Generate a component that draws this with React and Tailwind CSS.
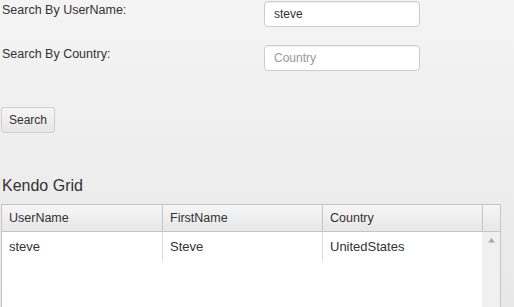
export default function App() {
  return (
    <div
      className="w-[514px] h-[307px] overflow-hidden bg-linear-to-b from-[#f4f4f4] to-[#e8e8e8] text-[#333333]"
      style={{ fontFamily: '"Liberation Sans", Arial, sans-serif' }}
    >
      <div className="flex pt-[1px]">
        <div className="w-[264px] pl-[2px] text-[12.5px] leading-[18px]">Search By UserName:</div>
        <input
          className="w-[156px] h-[26px] bg-white border border-[#cccccc] rounded-[4px] pl-[9px] text-[12px] text-[#333] outline-none shadow-[inset_0_1px_1px_rgba(0,0,0,0.06)]"
          style={{ fontFamily: '"Liberation Sans", Arial, sans-serif' }}
          defaultValue="steve"
        />
      </div>
      <div className="flex mt-[18px]">
        <div className="w-[264px] pl-[2px] text-[12.5px] leading-[18px]">Search By Country:</div>
        <input
          className="w-[156px] h-[26px] bg-white border border-[#cccccc] rounded-[4px] pl-[9px] text-[12px] text-[#333] placeholder:text-[#999999] outline-none shadow-[inset_0_1px_1px_rgba(0,0,0,0.06)]"
          style={{ fontFamily: '"Liberation Sans", Arial, sans-serif' }}
          placeholder="Country"
        />
      </div>
      <div className="mt-[36px] pl-[1px]">
        <button
          className="w-[54px] h-[26px] border border-[#cfcfcf] rounded-[3px] bg-linear-to-b from-[#f6f6f6] to-[#e6e6e6] text-[12px] text-[#333] leading-none"
          style={{ fontFamily: '"Liberation Sans", Arial, sans-serif' }}
        >
          Search
        </button>
      </div>
      <div className="mt-[43px] pl-[2px] text-[16px] leading-[20px] text-[#333]">Kendo Grid</div>
      <div className="mt-[8px] ml-[1px] w-[500px] border border-[#c5c5c5] bg-white">
        <div className="flex h-[27px] border-b border-[#c5c5c5] bg-linear-to-b from-[#f6f6f6] to-[#e7e7e7] text-[12.5px]">
          <div className="w-[160px] pl-[7px] leading-[26px]">UserName</div>
          <div className="w-[160px] pl-[7px] leading-[26px] border-l border-[#c5c5c5]">FirstName</div>
          <div className="w-[160px] pl-[7px] leading-[26px] border-l border-[#c5c5c5]">Country</div>
          <div className="w-[18px] border-l border-[#c5c5c5]"></div>
        </div>
        <div className="flex h-[100px] text-[13px]">
          <div className="w-[480px]">
            <div className="flex h-[29px]">
              <div className="w-[160px] pl-[7px] leading-[29px]">steve</div>
              <div className="w-[160px] pl-[7px] leading-[29px] border-l border-[#dddddd]">Steve</div>
              <div className="w-[160px] pl-[7px] leading-[29px] border-l border-[#dddddd]">UnitedStates</div>
            </div>
          </div>
          <div className="w-[18px] bg-[#f0f0f0] flex justify-center pt-[6px] pl-[1px]">
            <svg width="7" height="5" viewBox="0 0 7 5">
              <path d="M3.5 0 L7 4.5 L0 4.5 Z" fill="#a8a8a8" />
            </svg>
          </div>
        </div>
      </div>
    </div>
  );
}
